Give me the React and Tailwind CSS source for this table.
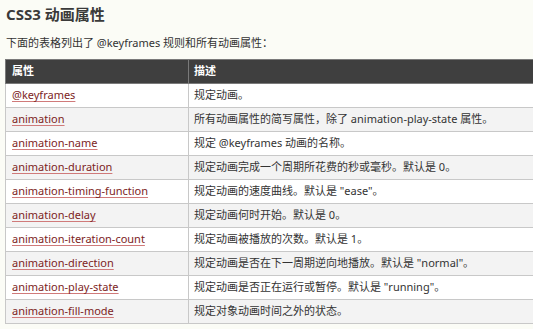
const rows = [
  ['@keyframes', '规定动画。'],
  ['animation', '所有动画属性的简写属性，除了 animation-play-state 属性。'],
  ['animation-name', '规定 @keyframes 动画的名称。'],
  ['animation-duration', '规定动画完成一个周期所花费的秒或毫秒。默认是 0。'],
  ['animation-timing-function', '规定动画的速度曲线。默认是 "ease"。'],
  ['animation-delay', '规定动画何时开始。默认是 0。'],
  ['animation-iteration-count', '规定动画被播放的次数。默认是 1。'],
  ['animation-direction', '规定动画是否在下一周期逆向地播放。默认是 "normal"。'],
  ['animation-play-state', '规定动画是否正在运行或暂停。默认是 "running"。'],
  ['animation-fill-mode', '规定对象动画时间之外的状态。'],
];

export default function App() {
  return (
    <div
      className="h-[329px] w-[533px] overflow-hidden bg-[#fbfcf6] pl-[5px] pt-[4px] text-[#333]"
      style={{ fontFamily: '"Noto Sans", "Noto Sans CJK SC", sans-serif' }}
    >
      <h1 className="pl-[1px] text-[15px] font-bold leading-[20px] text-[#3a3a3a]">CSS3 动画属性</h1>
      <p className="mt-[11px] pl-[1px] text-[11px] leading-[16px]">
        下面的表格列出了 @keyframes 规则和所有动画属性：
      </p>
      <table className="mt-[8px] w-[560px] border-collapse text-[11px]">
        <thead>
          <tr className="h-[24px] bg-[#3f3f3f] text-white">
            <th className="w-[183px] border border-[#7a7a7a] pl-[6px] text-left font-bold">属性</th>
            <th className="border border-[#7a7a7a] pl-[5px] text-left font-bold">描述</th>
          </tr>
        </thead>
        <tbody>
          {rows.map(([name, desc], i) => (
            <tr key={name} className={`h-[24px] ${i % 2 ? 'bg-[#f3f3f3]' : 'bg-white'}`}>
              <td className="border border-[#c8c8c8] pl-[6px]">
                <a
                  href="#"
                  className="text-[#7d2424] underline decoration-[#d07a7a] underline-offset-[2px]"
                >
                  {name}
                </a>
              </td>
              <td className="border border-[#c8c8c8] pl-[5px]">{desc}</td>
            </tr>
          ))}
        </tbody>
      </table>
    </div>
  );
}
